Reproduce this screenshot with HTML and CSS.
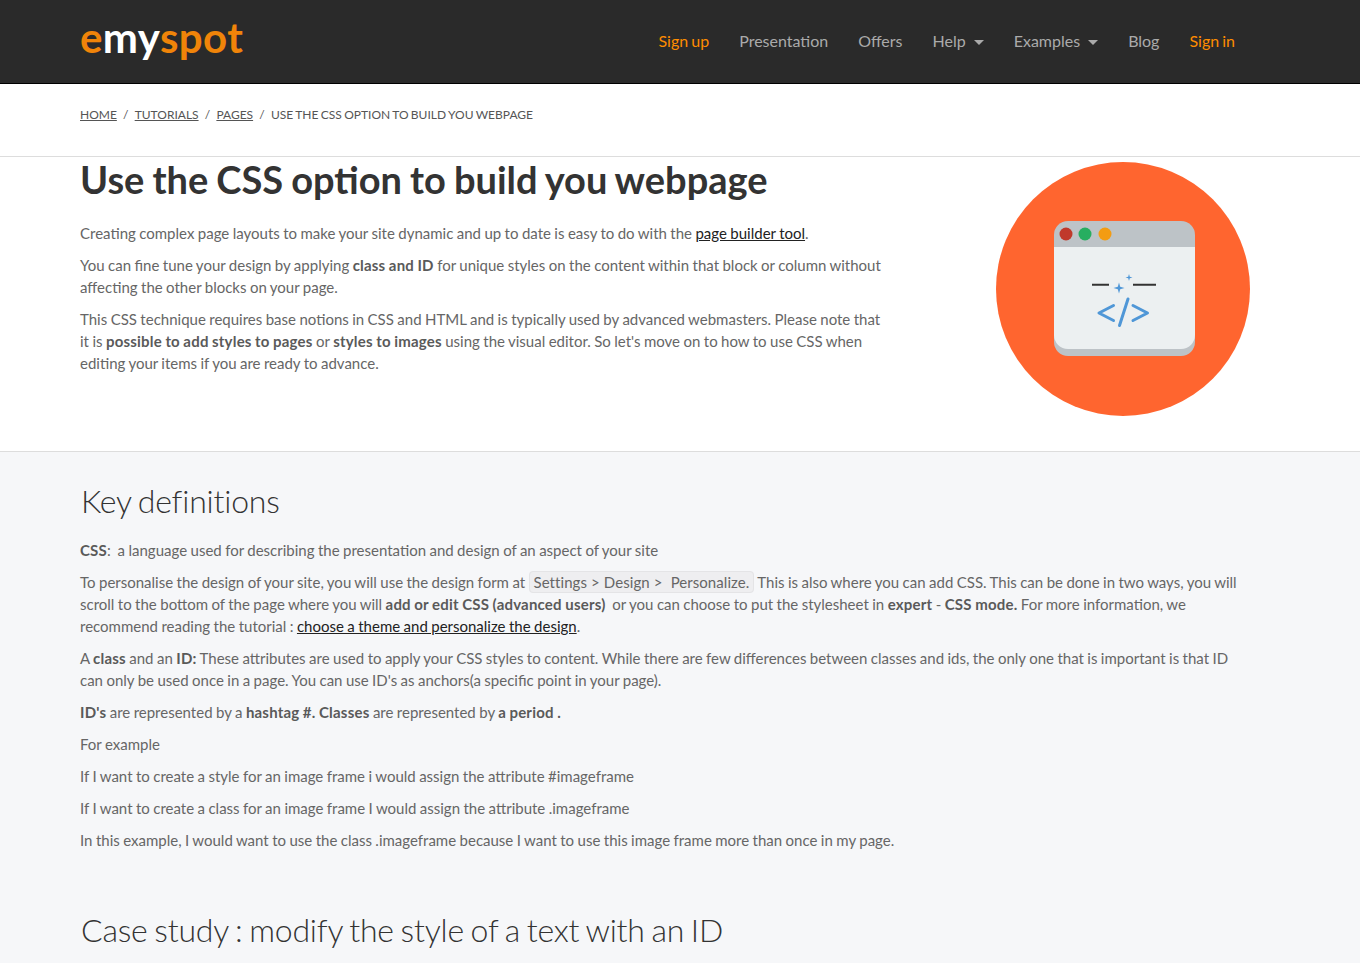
FILE: index.html
```html
<!DOCTYPE html>
<html lang="en">
<head>
    <meta charset="UTF-8">
    <meta name="viewport" content="width=device-width, initial-scale=1.0">
    <title>Use the CSS option to build you webpage</title>
    <link rel="stylesheet" href="styles.css">
</head>
<body>
<header class="topbar">
    <div class="wrap topbar-inner">
        <a class="logo" href="#"><span class="logo-orange">e</span><span class="logo-white">my</span><span class="logo-orange">spot</span></a>
        <nav class="nav">
            <a class="nav-link accent" href="#">Sign up</a>
            <a class="nav-link" href="#">Presentation</a>
            <a class="nav-link" href="#">Offers</a>
            <a class="nav-link caret" href="#">Help</a>
            <a class="nav-link caret" href="#">Examples</a>
            <a class="nav-link" href="#">Blog</a>
            <a class="nav-link accent" href="#">Sign in</a>
        </nav>
    </div>
</header>

<div class="crumbs">
    <div class="wrap">
        <a href="#">Home</a><span class="sep">/</span><a href="#">Tutorials</a><span class="sep">/</span><a href="#">Pages</a><span class="sep">/</span><span class="current">Use the CSS option to build you webpage</span>
    </div>
</div>

<section class="intro">
    <div class="wrap intro-inner">
        <div class="intro-text">
            <h1>Use the CSS option to build you webpage</h1>
            <p>Creating complex page layouts to make your site dynamic and up to date is easy to do with the <a href="#">page builder tool</a>.</p>
            <p>You can fine tune your design by applying <strong>class and ID</strong> for unique styles on the content within that block or column without affecting the other blocks on your page.</p>
            <p>This CSS technique requires base notions in CSS and HTML and is typically used by advanced webmasters. Please note that it is <strong>possible to add styles to pages</strong> or <strong>styles to images</strong> using the visual editor. So let's move on to how to use CSS when editing your items if you are ready to advance.</p>
        </div>
        <svg class="intro-icon" width="254" height="254" viewBox="0 0 254 254" aria-hidden="true">
            <circle cx="127" cy="127" r="127" fill="#ff652f"/>
            <rect x="58" y="59" width="141" height="135" rx="14" fill="#bdc3c7"/>
            <path d="M58 85h141v88a14 14 0 0 1-14 14H72a14 14 0 0 1-14-14z" fill="#ecf0f1"/>
            <circle cx="70" cy="72" r="6.500" fill="#c0392b"/>
            <circle cx="89" cy="72" r="6.500" fill="#27ae60"/>
            <circle cx="109" cy="72" r="6.500" fill="#f39c12"/>
            <path d="M96 122.700h17M137 122.700h23" stroke="#333" stroke-width="2" fill="none"/>
            <path d="M123 120.500l1.200 4.300 4.300 1.200-4.300 1.200-1.200 4.300-1.200-4.300-4.300-1.200 4.300-1.200zM133 112l.8 2.700 2.700.8-2.700.8-.8 2.700-.8-2.700-2.700-.8 2.700-.8z" fill="#4f97d7"/>
            <path d="M117.500 143.500l-14.500 7.500 14.500 7.500M137 143.500l14.500 7.500-14.500 7.500M132 137l-8.500 26.500" stroke="#4f97d7" stroke-width="3" stroke-linecap="round" stroke-linejoin="round" fill="none"/>
        </svg>
    </div>
</section>

<section class="content">
    <div class="wrap">
        <h2>Key definitions</h2>
        <p><strong>CSS</strong>:&nbsp; a language used for describing the presentation and design of an aspect of your site</p>
        <p>To personalise the design of your site, you will use the design form at <code class="path">Settings &gt; Design &gt;&nbsp; Personalize.</code> This is also where you can add CSS. This can be done in two ways, you will scroll to the bottom of the page where you will <strong>add or edit CSS (advanced users)</strong>&nbsp; or you can choose to put the stylesheet in <strong>expert</strong> - <strong>CSS mode.</strong> For more information, we recommend reading the tutorial : <a href="#">choose a theme and personalize the design</a>.</p>
        <p>A <strong>class</strong> and an <strong>ID:</strong> These attributes are used to apply your CSS styles to content. While there are few differences between classes and ids, the only one that is important is that ID can only be used once in a page. You can use ID's as anchors(a specific point in your page).</p>
        <p><strong>ID's</strong> are represented by a <strong>hashtag #. Classes</strong> are represented by <strong>a period .</strong></p>
        <p>For example</p>
        <p>If I want to create a style for an image frame i would assign the attribute #imageframe</p>
        <p>If I want to create a class for an image frame I would assign the attribute .imageframe</p>
        <p>In this example, I would want to use the class .imageframe because I want to use this image frame more than once in my page.</p>
        <h2 class="case">Case study : modify the style of a text with an ID</h2>
    </div>
</section>
</body>
</html>
```

FILE: styles.css
```css
html, body {
    height: 963px;
    overflow: hidden;
}

body {
    margin: 0;
    font-family: "Lato", sans-serif;
    font-size: 15px;
    line-height: 22px;
    word-spacing: -0.4px;
    color: #666;
    background-color: #fff;
}

a {
    color: #222;
}

.wrap {
    box-sizing: border-box;
    width: 1360px;
    padding: 0 120px 0 80px;
}

.topbar {
    height: 83px;
    background-color: #2a2a2a;
    border-bottom: 1px solid #000;
}

.topbar-inner {
    padding-right: 125px;
    height: 83px;
    display: flex;
    align-items: flex-start;
    justify-content: space-between;
}

.logo {
    font-weight: 700;
    font-size: 42px;
    line-height: 40px;
    letter-spacing: 0.4px;
    margin-top: 17px;
    text-decoration: none;
}

.logo-orange {
    color: #f08409;
}

.logo-white {
    color: #fff;
}

.nav {
    display: flex;
    gap: 30px;
    margin-top: 30px;
    font-size: 16px;
    word-spacing: -1px;
}

.nav-link {
    color: #aaa;
    text-decoration: none;
}

.nav-link.accent {
    color: #ff8c00;
}

.nav-link.caret::after {
    content: "";
    display: inline-block;
    margin-left: 8px;
    vertical-align: 2px;
    border-top: 5px solid #aaa;
    border-left: 5px solid transparent;
    border-right: 5px solid transparent;
}

.crumbs {
    height: 73px;
    box-sizing: border-box;
    padding-top: 20px;
    border-bottom: 1px solid #ddd;
    font-size: 12px;
    word-spacing: -0.7px;
    text-transform: uppercase;
    color: #555;
}

.crumbs a {
    color: #555;
}

.crumbs .sep {
    margin: 0 6.200px;
}

.intro {
    height: 294px;
}

.intro-inner {
    padding-right: 110px;
    display: flex;
    justify-content: space-between;
    align-items: flex-start;
}

.intro-text {
    width: 810px;
}

.intro-icon {
    margin-top: 5px;
}

h1 {
    margin: 0 0 21px;
    font-size: 38px;
    line-height: 44px;
    font-weight: 700;
    word-spacing: -1.200px;
    color: #333;
}

p {
    margin: 0 0 10px;
}

strong {
    color: #5a5a5a;
    letter-spacing: 0.2px;
}

.content {
    height: 512px;
    background-color: #f6f7f9;
    border-top: 1px solid #ddd;
    box-sizing: border-box;
    padding-top: 26px;
}

h2 {
    margin: 0 0 15px 1px;
    font-size: 32px;
    line-height: 46px;
    font-weight: 300;
    letter-spacing: -0.2px;
    word-spacing: -1.800px;
    color: #333;
}

h2.case {
    margin-top: 56px;
}

.path {
    font-family: "Lato", sans-serif;
    font-size: 15px;
    word-spacing: 0.200px;
    letter-spacing: 0.05px;
    padding: 1px 4px;
    background-color: #eeeef0;
    border: 1px solid #e4e4e6;
    border-radius: 4px;
}
```
